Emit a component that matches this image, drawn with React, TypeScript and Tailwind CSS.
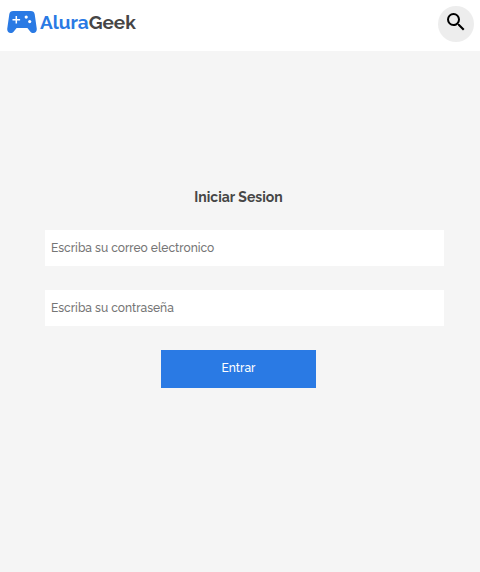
import React from "react";
import { MdSearch } from "react-icons/md";

function Logo() {
  return (
    <a href="#" className="flex items-center gap-[3px]" aria-label="AluraGeek">
      <svg width="30" height="24" viewBox="0 0 30 24" aria-hidden="true">
        <path
          d="M6.2 1H23.8C26 1 27.3 2.2 27.7 4.2L29.7 18.2C30.2 21 28.6 23 26.4 23C25 23 24.1 22.4 23.2 21.4L20.4 18H9.6L6.8 21.4C5.9 22.4 5 23 3.6 23C1.4 23 -.2 21 .3 18.2L2.3 4.2C2.7 2.2 4 1 6.2 1Z"
          fill="#2A7AE4"
        />
        <path d="M9.3 6V13.6M5.5 9.8H13.1" stroke="#fff" strokeWidth="1.5" />
        <circle cx="19.2" cy="7.1" r="1.6" fill="#fff" />
        <circle cx="22.7" cy="11.6" r="1.6" fill="#fff" />
      </svg>
      <span className="text-[19px] leading-6 font-bold text-[#2A7AE4]">
        Alura<span className="text-[#464646]">Geek</span>
      </span>
    </a>
  );
}

function Field({ type, label }: { type: string; label: string }) {
  return (
    <div className="pl-3">
      <input
        type={type}
        placeholder={label}
        aria-label={label}
        className="block h-9 w-full bg-white px-1.5 text-[12px] font-medium text-[#464646] outline-none placeholder:text-[#757575]"
      />
    </div>
  );
}

export default function App() {
  return (
    <div className="min-h-screen bg-[#F5F5F5] font-['Raleway','Lato',sans-serif]">
      <header className="flex items-start justify-between bg-white pt-1.5 pr-1.5 pb-[9px] pl-[7px]">
        <div className="pt-1">
          <Logo />
        </div>
        <button
          type="button"
          aria-label="Buscar"
          className="flex size-9 justify-center rounded-full bg-[#EDEDED] pt-1 text-black"
        >
          <MdSearch size={24} />
        </button>
      </header>
      <main className="pt-[138px] pr-9 pl-[33px]">
        <form className="flex flex-col gap-6" onSubmit={(e) => e.preventDefault()}>
          <h1 className="text-center text-[14px] leading-[17px] font-bold text-[#464646]">Iniciar Sesion</h1>
          <Field type="email" label="Escriba su correo electronico" />
          <Field type="password" label="Escriba su contraseña" />
          <button type="submit" className="h-[38px] w-[155px] self-center bg-[#2A7AE4] pb-0.5 text-[12px] font-medium text-white">
            Entrar
          </button>
        </form>
      </main>
    </div>
  );
}
